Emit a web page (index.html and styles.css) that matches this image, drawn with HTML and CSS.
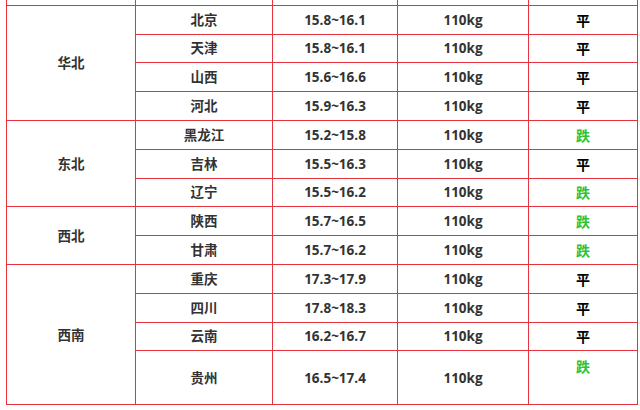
FILE: index.html
```html
<!DOCTYPE html>
<html lang="zh">
<head>
<meta charset="utf-8">
<link rel="stylesheet" href="styles.css">
</head>
<body>
<div class="wrap">
<table class="price">
  <colgroup>
    <col class="c1"><col class="c2"><col class="c3"><col class="c4"><col class="c5">
  </colgroup>
  <tr class="row"><td></td><td></td><td></td><td></td><td></td></tr>
  <tr class="row"><td rowspan="4">华北</td><td>北京</td><td>15.8~16.1</td><td>110kg</td><td class="flat">平</td></tr>
  <tr class="row"><td>天津</td><td>15.8~16.1</td><td>110kg</td><td class="flat">平</td></tr>
  <tr class="row"><td>山西</td><td>15.6~16.6</td><td>110kg</td><td class="flat">平</td></tr>
  <tr class="row"><td>河北</td><td>15.9~16.3</td><td>110kg</td><td class="flat">平</td></tr>
  <tr class="row"><td rowspan="3">东北</td><td>黑龙江</td><td>15.2~15.8</td><td>110kg</td><td class="down">跌</td></tr>
  <tr class="row"><td>吉林</td><td>15.5~16.3</td><td>110kg</td><td class="flat">平</td></tr>
  <tr class="row"><td>辽宁</td><td>15.5~16.2</td><td>110kg</td><td class="down">跌</td></tr>
  <tr class="row"><td rowspan="2">西北</td><td>陕西</td><td>15.7~16.5</td><td>110kg</td><td class="down">跌</td></tr>
  <tr class="row"><td>甘肃</td><td>15.7~16.2</td><td>110kg</td><td class="down">跌</td></tr>
  <tr class="row"><td rowspan="4">西南</td><td>重庆</td><td>17.3~17.9</td><td>110kg</td><td class="flat">平</td></tr>
  <tr class="row"><td>四川</td><td>17.8~18.3</td><td>110kg</td><td class="flat">平</td></tr>
  <tr class="row"><td>云南</td><td>16.2~16.7</td><td>110kg</td><td class="flat">平</td></tr>
  <tr class="tall"><td>贵州</td><td>16.5~17.4</td><td>110kg</td><td class="down top">跌</td></tr>
</table>
</div>
</body>
</html>
```
FILE: styles.css
```css
html, body {
  margin: 0;
  padding: 0;
  background: #ffffff;
  overflow: hidden;
}
.wrap {
  padding-left: 6px;
  margin-top: -24px;
}
.price {
  border-collapse: collapse;
  table-layout: fixed;
  width: 631px;
  font-family: "Open Sans", "Noto Sans CJK SC", sans-serif;
  font-weight: 700;
  font-size: 13.5px;
  color: #333333;
}
.c1 { width: 129px; }
.c2 { width: 137px; }
.c3 { width: 125px; }
.c4 { width: 131px; }
.c5 { width: 109px; }
.price td {
  border: 1px solid #e6323c;
  text-align: center;
  vertical-align: middle;
  padding: 0;
  line-height: 18px;
}
.row { height: 28.8px; }
.tall { height: 54px; }
.flat {
  color: #000000;
  font-family: "Noto Sans CJK SC", sans-serif;
  font-size: 14px;
}
.down {
  color: #2ec22e;
  font-family: "Noto Sans CJK SC", sans-serif;
  font-size: 14px;
}
.price td.top {
  vertical-align: top;
  padding-top: 6px;
}
```
